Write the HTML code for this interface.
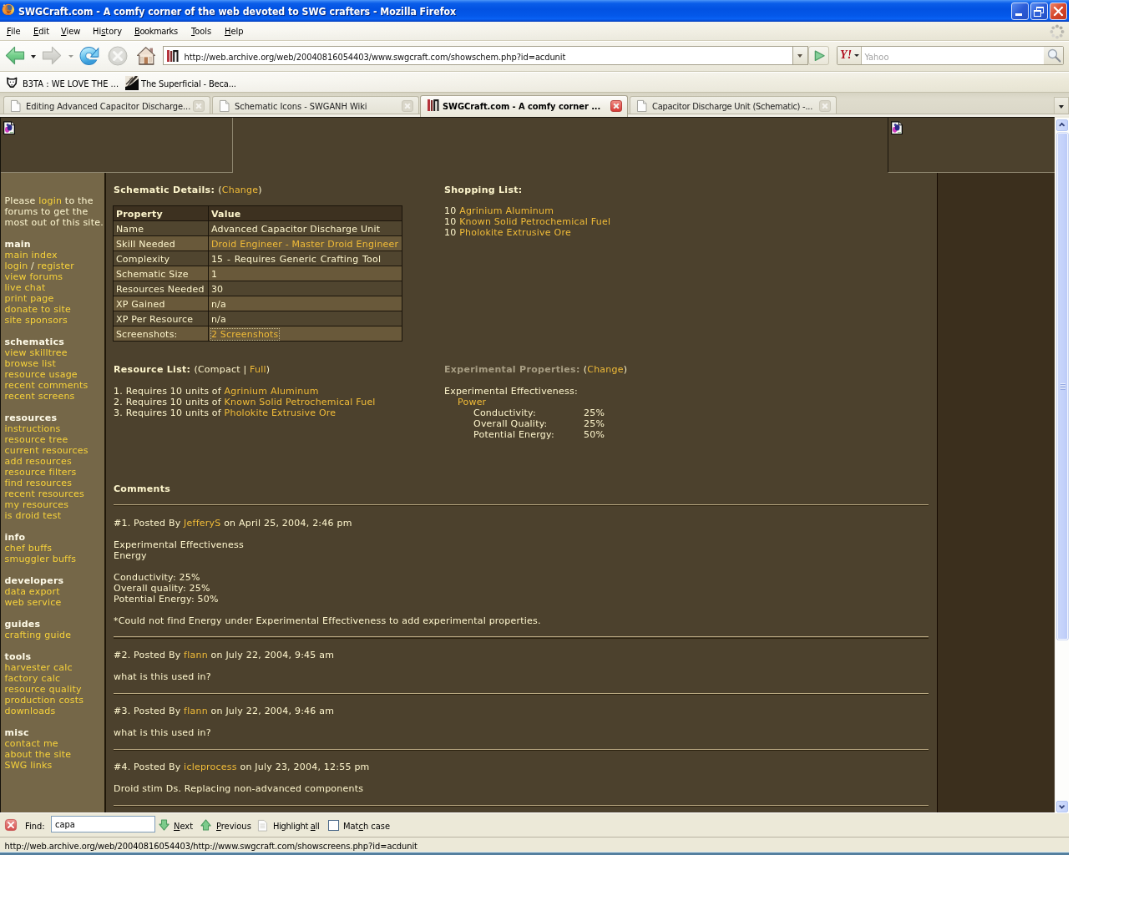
<!DOCTYPE html>
<html lang="en">
<head>
<meta charset="utf-8">
<title>SWGCraft.com - A comfy corner of the web devoted to SWG crafters - Mozilla Firefox</title>
<style>
html,body{margin:0;padding:0;background:#fff;overflow:hidden;}
body{width:1125px;height:900px;position:relative;}
#win{will-change:transform;position:absolute;left:0;top:0;width:1280px;height:1024px;transform:scale(0.835);transform-origin:0 0;background:#ece9d8;overflow:hidden;font-family:"DejaVu Sans Condensed","Liberation Sans",sans-serif;font-size:11px;color:#000;}
#win *{box-sizing:border-box;}
.abs{position:absolute;}
/* ---------- title bar ---------- */
#title{left:0;top:0;width:1280px;height:26px;background:linear-gradient(#4d97f9 0%,#2a78f0 7%,#0a5de9 16%,#0252e2 42%,#0458ea 74%,#0a62f4 87%,#0550dc 94%,#0238b4 100%);}
#title .txt{left:22px;top:6.5px;color:#fff;font-family:"DejaVu Sans Condensed","Liberation Sans",sans-serif;font-weight:bold;font-size:12.2px;white-space:nowrap;text-shadow:1px 1px 0 #0a2a7a;}
/* ---------- menu ---------- */
#menu{left:0;top:26px;width:1280px;height:22.7px;background:linear-gradient(rgba(255,255,255,0.35),rgba(255,255,255,0) 50%,rgba(120,110,70,0.05)),linear-gradient(90deg,#fbfbf8 0%,#f7f6f0 30%,#f1efe4 62%,#ece9d9 100%);border-bottom:1px solid #d3cfbc;}
#menu span{position:absolute;top:4.9px;white-space:nowrap;}
#menu u{text-decoration:underline;}
/* ---------- nav ---------- */
#nav{left:0;top:48.7px;width:1280px;height:37.3px;background:linear-gradient(rgba(255,255,255,0.3),rgba(255,255,255,0) 40%,rgba(120,110,70,0.06)),linear-gradient(90deg,#fbfbf8 0%,#f7f6f0 30%,#f1efe4 62%,#ece9d9 100%);border-top:1px solid #fff;border-bottom:1px solid #cdc9b6;}
#bm{left:0;top:86px;width:1280px;height:24px;background:linear-gradient(rgba(255,255,255,0.3),rgba(255,255,255,0) 40%,rgba(120,110,70,0.05)),linear-gradient(90deg,#fbfbf8 0%,#f7f6f0 30%,#f1efe4 62%,#ece9d9 100%);border-top:1px solid #fff;}
#tabs{left:0;top:110px;width:1280px;height:30.2px;background:linear-gradient(#d6d3c2,#dfdccd 25%,#dad7c7);border-top:1px solid #c4c0ac;}
#tabs:after{content:"";position:absolute;left:0;bottom:0;width:1280px;height:3.4px;background:#f1efe6;border-top:1px solid #b9b5a2;}
/* ---------- content ---------- */
#content{left:0;top:140.2px;width:1263px;height:832.8px;background:#4c412d;overflow:hidden;font-family:"DejaVu Sans","Liberation Sans",sans-serif;font-size:11px;letter-spacing:0.22px;color:#fdf5cc;}
#vscroll{left:1263px;top:139px;width:17px;height:834px;}
#find{left:0;top:973px;width:1280px;height:29px;background:#ece9d8;border-top:1px solid #fff;}
#status{left:0;top:1002px;width:1280px;height:20px;background:#ece9d8;border-top:1px solid #b8b4a2;}
#bottomline{left:0;top:1020.3px;width:1280px;height:3.7px;background:#55809f;border-top:1.5px solid #dcecf4;}

/* ---------- page ---------- */
#content a{color:#f0bb38;text-decoration:none;}
#frameTL{left:0;top:0;width:1263px;height:836px;border-top:1.6px solid #1a160e;border-left:1px solid #15120b;pointer-events:none;box-shadow:0 -1.2px 0 #cfccbb;}
#bannerL{left:1px;top:0.8px;width:278px;height:66px;border-right:1px solid #8f8770;border-bottom:1px solid #8f8770;}
#bannerR{left:1063px;top:0.8px;width:200px;height:66px;border-left:1px solid #1a150c;border-bottom:1px solid #8f8770;}
#side{left:1px;top:66.8px;width:124px;height:768px;background:#756748;line-height:13px;padding:27.2px 0 0 4.5px;white-space:nowrap;color:#fdf6d0;}
#side a{color:#f7d23a;}
#side b{color:#fffbe8;}
#sep{left:125px;top:66.8px;width:2.1px;height:768px;background:#1f1709;}
#rcol{left:1122px;top:66.8px;width:141px;height:768px;background:#3b2f1d;border-left:1.2px solid #150a02;}
#main{left:127px;top:66.8px;width:995px;height:768px;line-height:13px;}
#main .h{font-weight:bold;white-space:nowrap;letter-spacing:0.3px;}
#main .h span{font-weight:normal;letter-spacing:0.22px;}
#main .blk{position:absolute;white-space:nowrap;}
#main .dim{color:#a89e84;}
#main .dim span{color:#fdf5cc;}
a.foc{outline:1px dotted #c9bd8e;outline-offset:-0.5px;}
#main .hr{position:absolute;left:9px;width:976px;height:2.4px;border-top:1.2px solid #bcab84;border-bottom:1.2px solid #2a200d;}
table.sch{position:absolute;left:8.3px;top:39.2px;border-collapse:collapse;width:347px;}
table.sch td{border:1.7px solid #1a140b;padding:2.6px 2px 0.7px 2.6px;height:18px;line-height:13px;white-space:nowrap;background:#50452f;}
table.sch tr.hd td{background:#3d3120;font-weight:bold;}
table.sch tr.lt td{background:#69593a;}
.bimg{position:absolute;width:14px;height:16.5px;}

/* ---------- nav toolbar items ---------- */
#nav svg,#bm svg,#tabs svg,#find svg,#title svg{position:absolute;overflow:visible;}
.ddarrow{position:absolute;width:0;height:0;border-left:3.5px solid transparent;border-right:3.5px solid transparent;border-top:4px solid #222;}
#urlbar{left:195px;top:5.3px;width:754px;height:23px;background:#fff;border:1px solid #a5a08c;border-right:none;}
#urlbar .u{left:24.5px;top:6px;white-space:nowrap;font-size:11px;color:#111;letter-spacing:-0.09px;}
#urldd{left:949px;top:5.3px;width:19px;height:23px;background:linear-gradient(#f6f5ef,#e3e0d0);border:1px solid #a5a08c;}
#gobtn{left:967.5px;top:5.3px;width:25.5px;height:23px;border:1px solid #c9c5b2;border-radius:3px;background:linear-gradient(#f7f6f0,#e9e6d8);}
#search{left:1002px;top:5.3px;width:272px;height:23px;background:#fff;border:1px solid #a5a08c;border-radius:2px;}
#search .eng{left:0;top:0;width:29px;height:21px;background:linear-gradient(#f7f6f0,#e6e3d4);border-right:1px solid #b9b5a2;}
#search .ph{left:32.5px;top:6px;color:#a3a3a3;}
#search .mag{right:0;top:0;width:23px;height:21px;background:linear-gradient(#f4f3ec,#e3e0d0);}

/* ---------- bookmarks / tabs ---------- */
#bm span{position:absolute;top:7px;white-space:nowrap;}
.tab{position:absolute;top:4px;width:248px;height:23px;border:1px solid #bdb9a6;border-bottom:none;border-radius:3px 3px 0 0;background:linear-gradient(#efeee5,#e3e1d4);}
.tab .t{position:absolute;left:26px;top:5px;white-space:nowrap;color:#222;letter-spacing:-0.05px;}
.tab.act{top:3px;height:26.2px;background:linear-gradient(#fdfcf9,#efede3 60%,#ebe8da);border-color:#a9a490;z-index:2;}
.tab.act .t{font-weight:bold;color:#000;top:6px;}
.tab svg.pg{left:8px;top:4px;width:11.5px;height:14px;}
.tab .cl{position:absolute;right:6px;top:4px;width:14px;height:14px;border-radius:3px;background:#d9d6c9;border:1px solid #c9c6b8;}
.tab.act .cl{background:linear-gradient(#f08a82,#d63a36);border-color:#b8403a;top:5px;}
.tab .cl:before,.tab .cl:after{content:"";position:absolute;left:2px;top:5px;width:8px;height:2px;background:#f4f3ee;transform:rotate(45deg);}
.tab .cl:after{transform:rotate(-45deg);}
#tabdd{left:1262px;top:5px;width:18px;height:21px;border:1px solid #c4c0ad;background:linear-gradient(#efede3,#dedbcb);}
/* ---------- find / status ---------- */
#find span{position:absolute;top:9.3px;white-space:nowrap;}
#find .inp{position:absolute;left:61px;top:3.4px;width:125px;height:20px;background:#fff;border:1px solid #7f9db9;}
#find .inp span{left:4px;top:3px;}
#find .cb{position:absolute;left:393px;top:8px;width:13px;height:13px;background:#fff;border:1px solid #4c6a8a;}
#status span{position:absolute;left:5.5px;top:4px;white-space:nowrap;letter-spacing:-0.06px;}
/* ---------- scrollbar ---------- */
#vscroll{background:#fdfdfb;border-left:1px solid #f1f0ea;border-top:2.5px solid #ebe9dc;}
#vscroll .btn{position:absolute;left:1.3px;width:14.2px;height:14px;border:1px solid #b4c6f2;border-radius:2px;background:linear-gradient(90deg,#d3defb,#c3d1fa);}
#vscroll .thumb{position:absolute;left:1.5px;top:17.5px;width:13.5px;height:607.5px;border:0.6px solid #eef2fe;border-radius:2px;background:linear-gradient(90deg,#cad7fb,#c3d1fa 60%,#bccbf8);box-shadow:0 0 0 0.6px #aebfee;}
#vscroll .grip{position:absolute;left:3.2px;top:299px;width:6.5px;height:8px;background:repeating-linear-gradient(#eef3fe 0,#eef3fe 1px,#8da2df 1px,#8da2df 2px);opacity:0.85;}
.wb{position:absolute;top:3px;width:21px;height:21px;border:1.3px solid #cfdcfb;border-radius:3px;background:linear-gradient(135deg,#5a8df0,#2a5bd7 50%,#2450c4);}
.wb.x{background:linear-gradient(135deg,#ee8468,#d6472a 50%,#c0381f);}
</style>
</head>
<body>
<div id="win">
  <div id="title" class="abs"><svg style="left:2.2px;top:4.2px" width="15.8" height="14.8" viewBox="0 0 16 15"><defs><linearGradient id="gfx" x1="0" y1="0" x2="1" y2="0"><stop offset="0" stop-color="#f29a3a"/><stop offset="0.55" stop-color="#f08a2c"/><stop offset="1" stop-color="#f6e05a"/></linearGradient></defs><ellipse cx="8" cy="7.5" rx="7.8" ry="7.2" fill="#1b3f9a" opacity="0.55"/><ellipse cx="8" cy="7.5" rx="7.3" ry="6.8" fill="url(#gfx)"/><ellipse cx="8.8" cy="5.6" rx="3.7" ry="3.5" fill="#46679c"/><path d="M6.2 3 C7.6 4.2 7.6 6.4 6.6 8 C8 7.4 9.2 7.8 10 8.8 C8.6 10.6 5.8 10.4 4.6 8.6 C3.6 6.8 4.4 4.2 6.2 3Z" fill="#d9791f" opacity="0.85"/><path d="M6 9 C7.6 10.4 10 10.2 11.6 8.6 C11.4 10.8 9.4 12 7.6 11.6 C6.6 11.2 6 10.2 6 9Z" fill="#7a2410" opacity="0.8"/><path d="M2.6 12 C5 14.4 10.6 14.6 13.4 11.6 C11 13.2 5.6 13.4 2.6 12Z" fill="#c8501a" opacity="0.8"/><path d="M1.4 3.2 L3 0.8 L4.4 2.6 Z" fill="#f6c48a"/></svg>
    <div class="wb" style="left:1211px"><div class="abs" style="left:4px;top:12px;width:8px;height:3px;background:#fff"></div></div>
    <div class="wb" style="left:1234px"><div class="abs" style="left:6px;top:4px;width:9px;height:8px;border:1px solid #fff;border-top-width:2px"></div><div class="abs" style="left:3px;top:8px;width:9px;height:8px;border:1px solid #fff;border-top-width:2px;background:#2f60d6"></div></div>
    <div class="wb x" style="left:1257px"><svg width="19" height="19" viewBox="0 0 19 19" style="left:0;top:0"><path d="M5 5 L14 14 M14 5 L5 14" stroke="#fff" stroke-width="2.2" stroke-linecap="round"/></svg></div><div class="txt abs">SWGCraft.com - A comfy corner of the web devoted to SWG crafters - Mozilla Firefox</div></div>
  <div id="menu" class="abs">
    <span style="left:8px"><u>F</u>ile</span>
    <span style="left:40px"><u>E</u>dit</span>
    <span style="left:73px"><u>V</u>iew</span>
    <span style="left:111px">Hi<u>s</u>tory</span>
    <span style="left:161px;letter-spacing:-0.4px"><u>B</u>ookmarks</span>
    <span style="left:229px"><u>T</u>ools</span>
    <span style="left:269px"><u>H</u>elp</span>
    <svg class="abs" style="left:1257px;top:3px" width="18" height="18" viewBox="0 0 18 18"><circle cx="15.60" cy="9.00" r="1.9" fill="#b9b7ae"/><circle cx="13.67" cy="13.67" r="1.9" fill="#c4c2ba"/><circle cx="9.00" cy="15.60" r="1.9" fill="#cfcdc6"/><circle cx="4.33" cy="13.67" r="1.9" fill="#d8d6d0"/><circle cx="2.40" cy="9.00" r="1.9" fill="#c9c7c0"/><circle cx="4.33" cy="4.33" r="1.9" fill="#bdbbb3"/><circle cx="9.00" cy="2.40" r="1.9" fill="#b0aea5"/><circle cx="13.67" cy="4.33" r="1.9" fill="#a9a79e"/></svg>
  </div>
  <div id="nav" class="abs">
    <svg style="left:5.5px;top:5.8px" width="24" height="23" viewBox="0 0 25 24"><defs><linearGradient id="gback" x1="0" y1="0" x2="0" y2="1"><stop offset="0" stop-color="#b9ecc2"/><stop offset="0.5" stop-color="#74cf8b"/><stop offset="1" stop-color="#52b570"/></linearGradient><linearGradient id="gfwd" x1="0" y1="0" x2="0" y2="1"><stop offset="0" stop-color="#e6e6e2"/><stop offset="1" stop-color="#c3c3bd"/></linearGradient></defs><path d="M1.5 12 L12 1.5 L12 7.5 L23.5 7.5 L23.5 16.5 L12 16.5 L12 22.5 Z" fill="url(#gback)" stroke="#4f9f68" stroke-width="1.2" stroke-linejoin="round"/></svg>
    <div class="ddarrow" style="left:36.8px;top:16.5px"></div>
    <svg style="left:49.5px;top:5.8px" width="24" height="23" viewBox="0 0 25 24"><path d="M23.5 12 L13 1.5 L13 7.5 L1.5 7.5 L1.5 16.5 L13 16.5 L13 22.5 Z" fill="url(#gfwd)" stroke="#b9b9b3" stroke-width="1.2" stroke-linejoin="round"/></svg>
    <div class="ddarrow" style="left:81.5px;top:16.8px;border-top-color:#9a9a94;border-left-width:3px;border-right-width:3px;border-top-width:3.5px"></div>
    <svg style="left:94px;top:4.3px" width="25" height="26" viewBox="0 0 25 26"><defs><linearGradient id="grel" x1="0.2" y1="0" x2="0.5" y2="1"><stop offset="0" stop-color="#aee5fa"/><stop offset="0.55" stop-color="#62c0ec"/><stop offset="1" stop-color="#3a9cda"/></linearGradient><clipPath id="rc"><path clip-rule="evenodd" d="M0 0H26V26H0Z M12.5 14.6 H26 V17.4 H12.5Z"/></clipPath></defs><g clip-path="url(#rc)"><circle cx="12.5" cy="13" r="7.1" fill="none" stroke="#2a82c2" stroke-width="7.6"/><circle cx="12.5" cy="13" r="7.1" fill="none" stroke="url(#grel)" stroke-width="6"/></g><path d="M13.7 14.4 L24.3 14.4 L24.3 2.5999999999999996 Z" fill="#2a82c2"/><path d="M15.9 13.5 L23.4 13.5 L23.4 5 Z" fill="#7ccdf3"/></svg>
    <svg style="left:129px;top:5.3px" width="24" height="24" viewBox="0 0 24 24"><circle cx="12" cy="12" r="11" fill="#d4d4cf" stroke="#bdbdb7" stroke-width="1"/><circle cx="12" cy="10.5" r="9" fill="#e2e2de" opacity="0.7"/><path d="M7.5 7.5 L16.5 16.5 M16.5 7.5 L7.5 16.5" stroke="#f8f8f6" stroke-width="3" stroke-linecap="round"/></svg>
    <svg style="left:164px;top:6.4px" width="22" height="22" viewBox="0 0 22 22"><rect x="15.4" y="1.6" width="3.6" height="7" fill="#a8837c"/><path d="M0.6 10.4 L10.6 0.8 L21.4 10.4 L19.8 10.4 L19.8 21 L2.8 21 L2.8 10.4 Z" fill="#f5e8da" stroke="#75655a" stroke-width="1.2" stroke-linejoin="round"/><path d="M10.6 2.2 L3.6 9.2 L17.8 9.2 Z" fill="#e9d9c9" opacity="0.7"/><rect x="8.6" y="12.4" width="4.4" height="8.4" fill="#b27a52"/><rect x="4.3" y="12.2" width="2.8" height="6" fill="#dfd0c0" stroke="#c9b8a6" stroke-width="0.5"/><rect x="14.6" y="12.2" width="2.8" height="6" fill="#dfd0c0" stroke="#c9b8a6" stroke-width="0.5"/><path d="M2.4 21 L20.2 21" stroke="#5f5046" stroke-width="1.3"/></svg>
    <div id="urlbar" class="abs">
      <svg style="left:4px;top:4px" width="14" height="14" viewBox="0 0 14 14"><rect x="0" y="0" width="3" height="14" fill="#b5343c"/><rect x="4" y="1" width="2.2" height="13" fill="#7a2a2a"/><rect x="7.2" y="0" width="6.3" height="2.2" fill="#1a1a1a"/><rect x="7.2" y="2" width="2" height="12" fill="#1a1a1a"/><rect x="11.5" y="2" width="2" height="12" fill="#1a1a1a"/></svg>
      <div class="u abs">http://web.archive.org/web/20040816054403/www.swgcraft.com/showschem.php?id=acdunit</div>
    </div>
    <div id="urldd" class="abs"><div class="ddarrow" style="left:5px;top:9px;border-top-color:#5a5246"></div></div>
    <div id="gobtn" class="abs"><svg style="left:6.5px;top:4px" width="13" height="13.5" viewBox="0 0 14 14"><path d="M1.5 1 L13 7 L1.5 13 Z" fill="#86d09a" stroke="#4e9e66" stroke-width="1.5" stroke-linejoin="round"/></svg></div>
    <div id="search" class="abs">
      <div class="eng abs"><span class="abs" style="left:3px;top:2.5px;font-family:'Liberation Serif',serif;font-weight:bold;font-style:italic;font-size:14px;color:#b01020;letter-spacing:0.3px;line-height:15px">Y!</span><div class="ddarrow" style="left:20px;top:9.5px;border-left-width:3px;border-right-width:3px;border-top-width:3.5px"></div></div>
      <div class="ph abs">Yahoo</div>
      <div class="mag abs"><svg style="left:4px;top:2.5px" width="17" height="17" viewBox="0 0 17 17"><circle cx="6.5" cy="6.5" r="5" fill="#eef3f8" stroke="#9aa3ad" stroke-width="1.3"/><path d="M10.5 10.5 L15.5 15.5" stroke="#8a8f96" stroke-width="2.2" stroke-linecap="round"/></svg></div>
    </div>
  </div>
  <div id="bm" class="abs">
    <svg style="left:8px;top:5px" width="12.5" height="13.5" viewBox="0 0 14 15"><path d="M1 1.5 L4 3 L10 3 L13 1.5 L12.5 9 L9 13.5 L5 13.5 L1.5 9 Z" fill="#fff" stroke="#111" stroke-width="1.8" stroke-linejoin="round"/><circle cx="5" cy="7" r="0.8" fill="#222"/><circle cx="9" cy="7" r="0.8" fill="#222"/><path d="M5.5 11 L8.5 11" stroke="#222" stroke-width="1"/></svg>
    <span style="left:27px">B3TA : WE LOVE THE ...</span>
    <svg style="left:149.5px;top:3.5px" width="16" height="17" viewBox="0 0 16 17"><rect x="0" y="0" width="16" height="17" fill="#ece6da"/><path d="M0 17 L0 13 L6 11 L16 3 L16 17 Z" fill="#0b0b0b"/><path d="M4 9 L12 0 L15 0 L8 8 Z" fill="#2a2622"/><path d="M1 10 L9 2 M3 12 L14 1" stroke="#3a342e" stroke-width="1.3"/><path d="M5 4 L9 1" stroke="#8a7a6a" stroke-width="1"/></svg>
    <span style="left:169px;letter-spacing:-0.15px">The Superficial - Beca...</span>
  </div>
  <div id="tabs" class="abs">
    <div class="tab" style="left:4px"><svg class="pg" width="13" height="16" viewBox="0 0 13 16"><path d="M0.5 0.5 L8.5 0.5 L12.5 4.5 L12.5 15.5 L0.5 15.5 Z" fill="#fdfdfd" stroke="#9a9a94"/><path d="M8.5 0.5 L8.5 4.5 L12.5 4.5" fill="#e6e6e2" stroke="#9a9a94"/></svg><span class="t">Editing Advanced Capacitor Discharge...</span><div class="cl"></div></div>
    <div class="tab" style="left:254px"><svg class="pg" width="13" height="16" viewBox="0 0 13 16"><path d="M0.5 0.5 L8.5 0.5 L12.5 4.5 L12.5 15.5 L0.5 15.5 Z" fill="#fdfdfd" stroke="#9a9a94"/><path d="M8.5 0.5 L8.5 4.5 L12.5 4.5" fill="#e6e6e2" stroke="#9a9a94"/></svg><span class="t">Schematic Icons - SWGANH Wiki</span><div class="cl"></div></div>
    <div class="tab act" style="left:503px;width:249px"><svg class="pg" viewBox="0 0 14 14" style="top:4px;width:14px;height:14px"><rect x="0" y="0" width="3" height="14" fill="#b5343c"/><rect x="4" y="1" width="2.2" height="13" fill="#7a2a2a"/><rect x="7.2" y="0" width="6.3" height="2.2" fill="#1a1a1a"/><rect x="7.2" y="2" width="2" height="12" fill="#1a1a1a"/><rect x="11.5" y="2" width="2" height="12" fill="#1a1a1a"/></svg><span class="t">SWGCraft.com - A comfy corner ...</span><div class="cl"></div></div>
    <div class="tab" style="left:754px"><svg class="pg" width="13" height="16" viewBox="0 0 13 16"><path d="M0.5 0.5 L8.5 0.5 L12.5 4.5 L12.5 15.5 L0.5 15.5 Z" fill="#fdfdfd" stroke="#9a9a94"/><path d="M8.5 0.5 L8.5 4.5 L12.5 4.5" fill="#e6e6e2" stroke="#9a9a94"/></svg><span class="t" style="letter-spacing:-0.25px">Capacitor Discharge Unit (Schematic) -...</span><div class="cl"></div></div>
    <div id="tabdd" class="abs"><div class="ddarrow" style="left:5px;top:9px;border-left-width:3px;border-right-width:3px"></div></div>
  </div>
  <div id="content" class="abs">
    <div id="bannerL" class="abs"><svg class="bimg" style="left:3px;top:4px" viewBox="0 0 14 16"><path d="M0.6 0.6 L9.5 0.6 L13.4 4.5 L13.4 15.4 L0.6 15.4 Z" fill="#f6f6f2" stroke="#0a0a0a" stroke-width="1.3"/><path d="M9.5 0.6 L9.5 4.5 L13.4 4.5" fill="#e8e8e4" stroke="#0a0a0a" stroke-width="1"/><ellipse cx="4.6" cy="10" rx="2.6" ry="3.4" fill="#d23ac0"/><ellipse cx="7.6" cy="7.6" rx="2.9" ry="3.6" fill="#2a2a86"/><circle cx="5.2" cy="4.2" r="1.5" fill="#3b3b96"/><path d="M8 13.5 L12 13.5" stroke="#6aa56a" stroke-width="1"/></svg></div>
    <div id="bannerR" class="abs"><svg class="bimg" style="left:3px;top:4px" viewBox="0 0 14 16"><path d="M0.6 0.6 L9.5 0.6 L13.4 4.5 L13.4 15.4 L0.6 15.4 Z" fill="#f6f6f2" stroke="#0a0a0a" stroke-width="1.3"/><path d="M9.5 0.6 L9.5 4.5 L13.4 4.5" fill="#e8e8e4" stroke="#0a0a0a" stroke-width="1"/><ellipse cx="4.6" cy="10" rx="2.6" ry="3.4" fill="#d23ac0"/><ellipse cx="7.6" cy="7.6" rx="2.9" ry="3.6" fill="#2a2a86"/><circle cx="5.2" cy="4.2" r="1.5" fill="#3b3b96"/><path d="M8 13.5 L12 13.5" stroke="#6aa56a" stroke-width="1"/></svg></div>
    <div id="side" class="abs">
Please <a>login</a> to the<br>
forums to get the<br>
most out of this site.<br>
<br>
<b>main</b><br>
<a>main index</a><br>
<a>login</a> / <a>register</a><br>
<a>view forums</a><br>
<a>live chat</a><br>
<a>print page</a><br>
<a>donate to site</a><br>
<a>site sponsors</a><br>
<br>
<b>schematics</b><br>
<a>view skilltree</a><br>
<a>browse list</a><br>
<a>resource usage</a><br>
<a>recent comments</a><br>
<a>recent screens</a><br>
<br>
<b>resources</b><br>
<a>instructions</a><br>
<a>resource tree</a><br>
<a>current resources</a><br>
<a>add resources</a><br>
<a>resource filters</a><br>
<a>find resources</a><br>
<a>recent resources</a><br>
<a>my resources</a><br>
<a>is droid test</a><br>
<br>
<b>info</b><br>
<a>chef buffs</a><br>
<a>smuggler buffs</a><br>
<br>
<b>developers</b><br>
<a>data export</a><br>
<a>web service</a><br>
<br>
<b>guides</b><br>
<a>crafting guide</a><br>
<br>
<b>tools</b><br>
<a>harvester calc</a><br>
<a>factory calc</a><br>
<a>resource quality</a><br>
<a>production costs</a><br>
<a>downloads</a><br>
<br>
<b>misc</b><br>
<a>contact me</a><br>
<a>about the site</a><br>
<a>SWG links</a>
    </div>
    <div id="sep" class="abs"></div>
    <div id="main" class="abs">
<div class="blk" style="left:9px;top:14.3px"><span class="h">Schematic Details: <span>(<a>Change</a>)</span></span></div>
<table class="sch">
<tr class="hd"><td style="width:114px">Property</td><td>Value</td></tr>
<tr class=""><td style="width:114px">Name</td><td>Advanced Capacitor Discharge Unit</td></tr>
<tr class="lt"><td style="width:114px">Skill Needed</td><td><a>Droid Engineer - Master Droid Engineer</a></td></tr>
<tr class=""><td style="width:114px">Complexity</td><td style="word-spacing:0.9px">15 - Requires Generic Crafting Tool</td></tr>
<tr class="lt"><td style="width:114px">Schematic Size</td><td>1</td></tr>
<tr class=""><td style="width:114px">Resources Needed</td><td>30</td></tr>
<tr class="lt"><td style="width:114px">XP Gained</td><td>n/a</td></tr>
<tr class=""><td style="width:114px">XP Per Resource</td><td>n/a</td></tr>
<tr class="lt"><td style="width:114px">Screenshots:</td><td><a class="foc">2 Screenshots</a></td></tr>
</table>
<div class="blk" style="left:405px;top:14.3px"><span class="h">Shopping List:</span></div>
<div class="blk" style="left:405px;top:39.5px">10 <a>Agrinium Aluminum</a><br>10 <a>Known Solid Petrochemical Fuel</a><br>10 <a>Pholokite Extrusive Ore</a></div>
<div class="blk" style="left:9px;top:229.3px"><span class="h">Resource List: <span>(Compact | <a>Full</a>)</span></span></div>
<div class="blk" style="left:9px;top:255.2px">1. Requires 10 units of <a>Agrinium Aluminum</a><br>2. Requires 10 units of <a>Known Solid Petrochemical Fuel</a><br>3. Requires 10 units of <a>Pholokite Extrusive Ore</a></div>
<div class="blk" style="left:405px;top:229.3px"><span class="h dim">Experimental Properties: <span>(<a>Change</a>)</span></span></div>
<div class="blk" style="left:405px;top:255.2px">Experimental Effectiveness:</div>
<div class="blk" style="left:421px;top:268.2px"><a>Power</a></div>
<div class="blk" style="left:440px;top:281.2px">Conductivity:<br>Overall Quality:<br>Potential Energy:</div>
<div class="blk" style="left:572px;top:281.2px">25%<br>25%<br>50%</div>
<div class="blk" style="left:9px;top:372.0px"><span class="h">Comments</span></div>
<div class="hr" style="top:396.7px"></div>
<div class="blk" style="left:9px;top:413.5px">#1. Posted By <a>JefferyS</a> on April 25, 2004, 2:46 pm</div>
<div class="blk" style="left:9px;top:439.5px">Experimental Effectiveness<br>Energy</div>
<div class="blk" style="left:9px;top:478.5px">Conductivity: 25%<br>Overall quality: 25%<br>Potential Energy: 50%</div>
<div class="blk" style="left:9px;top:530.3px">*Could not find Energy under Experimental Effectiveness to add experimental properties.</div>
<div class="hr" style="top:555.2px"></div>
<div class="blk" style="left:9px;top:571.3px">#2. Posted By <a>flann</a> on July 22, 2004, 9:45 am</div>
<div class="blk" style="left:9px;top:597.3px">what is this used in?</div>
<div class="hr" style="top:622.6px"></div>
<div class="blk" style="left:9px;top:638.3px">#3. Posted By <a>flann</a> on July 22, 2004, 9:46 am</div>
<div class="blk" style="left:9px;top:664.3px">what is this used in?</div>
<div class="hr" style="top:689.6px"></div>
<div class="blk" style="left:9px;top:705.3px">#4. Posted By <a>icleprocess</a> on July 23, 2004, 12:55 pm</div>
<div class="blk" style="left:9px;top:731.3px">Droid stim Ds. Replacing non-advanced components</div>
<div class="hr" style="top:756.6px"></div>
    </div>
    <div id="rcol" class="abs"></div>
    <div id="frameTL" class="abs"></div>
  </div>
  <div id="vscroll" class="abs">
    <div class="btn" style="top:1.5px"><svg width="11.5" height="11.5" viewBox="0 0 13 14" style="position:absolute;left:0;top:0"><path d="M3 8.5 L6.5 5 L10 8.5" fill="none" stroke="#33437a" stroke-width="2.2"/></svg></div>
    <div class="thumb"><div class="grip"></div></div>
    <div class="btn" style="bottom:0.4px"><svg width="11.5" height="11.5" viewBox="0 0 13 14" style="position:absolute;left:0;top:0"><path d="M3 5.5 L6.5 9 L10 5.5" fill="none" stroke="#33437a" stroke-width="2.2"/></svg></div>
  </div>
  <div id="find" class="abs">
    <svg style="left:6px;top:7.3px" width="14" height="14" viewBox="0 0 15 15"><defs><linearGradient id="gcl" x1="0" y1="0" x2="0" y2="1"><stop offset="0" stop-color="#ee9a96"/><stop offset="1" stop-color="#d24a4a"/></linearGradient></defs><rect x="0.5" y="0.5" width="14" height="14" rx="3.5" fill="url(#gcl)" stroke="#c85a58"/><path d="M4.2 4.2 L10.8 10.8 M10.8 4.2 L4.2 10.8" stroke="#fff" stroke-width="2" stroke-linecap="round"/></svg>
    <span style="left:30px">Find:</span>
    <div class="inp"><span>capa</span></div>
    <svg style="left:190px;top:7.3px" width="13" height="14" viewBox="0 0 15 16"><path d="M4 1 L11 1 L11 7 L14 7 L7.5 15 L1 7 L4 7 Z" fill="#7ccb8b" stroke="#4a9a5e" stroke-width="1.2" stroke-linejoin="round"/></svg>
    <span style="left:208px"><u>N</u>ext</span>
    <svg style="left:240px;top:7.3px" width="13" height="14" viewBox="0 0 15 16"><path d="M4 15 L11 15 L11 9 L14 9 L7.5 1 L1 9 L4 9 Z" fill="#7ccb8b" stroke="#4a9a5e" stroke-width="1.2" stroke-linejoin="round"/></svg>
    <span style="left:259px"><u>P</u>revious</span>
    <svg style="left:309px;top:7.5px" width="11" height="13.5" viewBox="0 0 13 16"><path d="M0.5 0.5 L8.5 0.5 L12.5 4.5 L12.5 15.5 L0.5 15.5 Z" fill="#fdfdfd" stroke="#b5b5ae"/><path d="M3 6 H10 M3 8.5 H10 M3 11 H10" stroke="#c9c9c2" stroke-width="1"/></svg>
    <span style="left:327px;letter-spacing:-0.3px">Highlight <u>a</u>ll</span>
    <div class="cb"></div>
    <span style="left:411px">Mat<u>c</u>h case</span>
  </div>
  <div id="status" class="abs"><span>http://web.archive.org/web/20040816054403/http://www.swgcraft.com/showscreens.php?id=acdunit</span></div>
  <div id="bottomline" class="abs"></div>
</div>
</body>
</html>
